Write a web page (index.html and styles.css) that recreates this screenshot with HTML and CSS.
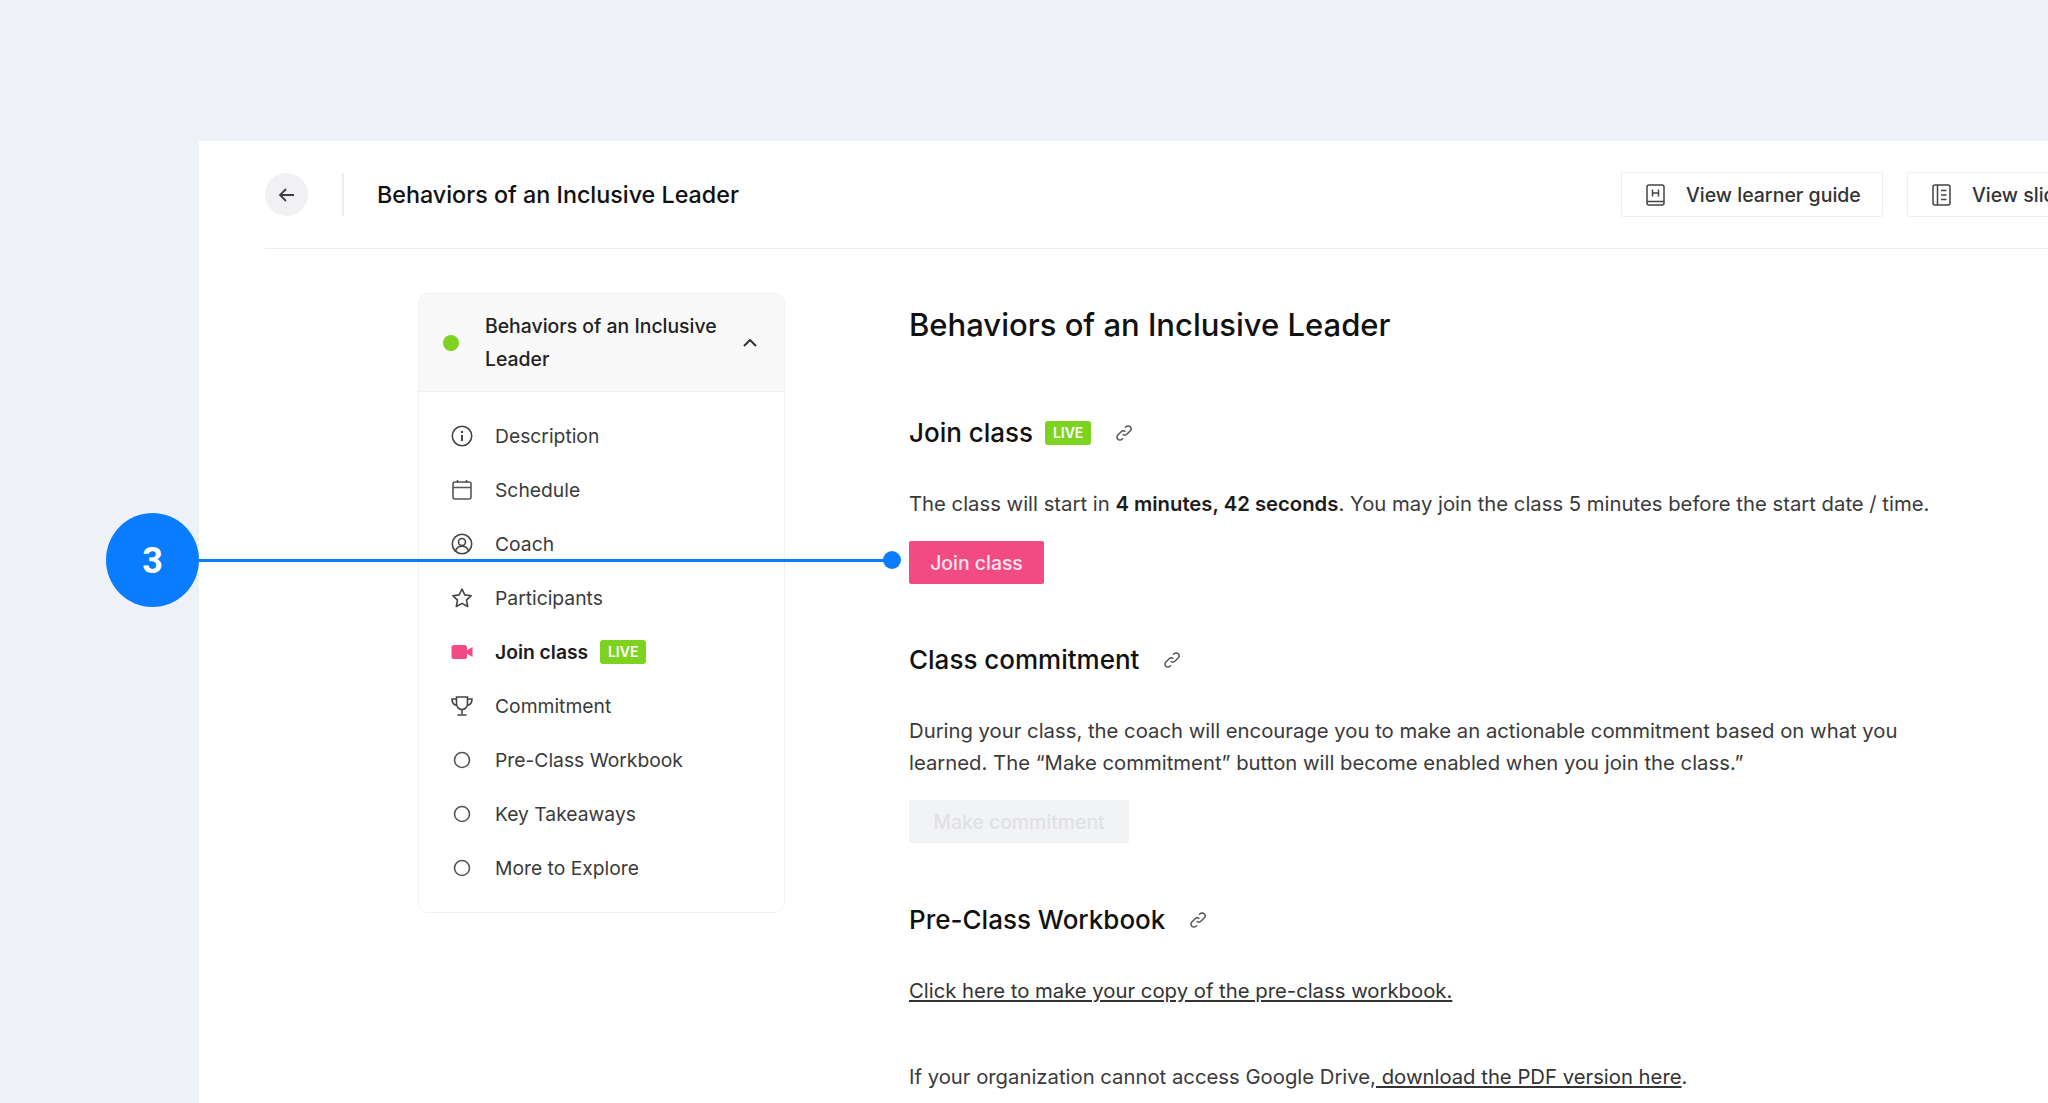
FILE: index.html
```html
<!DOCTYPE html>
<html lang="en">
<head>
  <meta charset="UTF-8">
  <title>Behaviors of an Inclusive Leader</title>
  <link rel="stylesheet" href="styles.css">
</head>
<body>
  <div class="panel">
    <header class="topbar">
      <button class="back">
        <svg width="20" height="20" viewBox="0 0 20 20" fill="none" stroke="#3c3c44" stroke-width="1.8"><path d="M17 10H3.500M9 4l-6 6 6 6"/></svg>
      </button>
      <div class="topbar-rule"></div>
      <div class="topbar-title">Behaviors of an Inclusive Leader</div>
      <button class="ghost">
        <svg width="19" height="22" viewBox="0 0 19 22" fill="none" stroke="#444" stroke-width="1.500"><rect x="1" y="1" width="17" height="20" rx="2"/><path d="M1 17.500h17M6.500 5.500v7M12.500 5.500v7M6.500 9h6"/></svg>
        View learner guide
      </button>
      <button class="ghost">
        <svg width="19" height="22" viewBox="0 0 19 22" fill="none" stroke="#444" stroke-width="1.500"><rect x="1" y="1" width="17" height="20" rx="2"/><path d="M5.500 1v20M9 6.500h5.500M9 11h5.500M9 15.500h5.500"/></svg>
        View slides
      </button>
    </header>

    <div class="layout">
      <aside class="side">
        <div class="side-head">
          <span class="dot"></span>
          <span class="side-title">Behaviors of an Inclusive Leader</span>
          <svg width="16" height="10" viewBox="0 0 16 10" fill="none" stroke="#333" stroke-width="2"><path d="M2 8l6-6 6 6"/></svg>
        </div>
        <ul class="menu">
          <li><svg class="mi" viewBox="0 0 22 22" fill="none" stroke="#444" stroke-width="1.600"><circle cx="11" cy="11" r="9.700"/><path d="M11 10v6" stroke-width="2"/><path d="M11 6v2" stroke-width="2"/></svg>Description</li>
          <li><svg class="mi" viewBox="0 0 22 22" fill="none" stroke="#555" stroke-width="1.600"><rect x="2" y="3" width="18" height="17" rx="2"/><path d="M2 8.500h18M6.500 1v3M15.500 1v3"/></svg>Schedule</li>
          <li><svg class="mi" viewBox="0 0 22 22" fill="none" stroke="#444" stroke-width="1.600"><circle cx="11" cy="11" r="9.700"/><circle cx="11" cy="9" r="3.500"/><path d="M4.500 18c1-3.500 3.500-4.800 6.500-4.800s5.500 1.300 6.500 4.800"/></svg>Coach</li>
          <li><svg class="mi" viewBox="0 0 22 22" fill="none" stroke="#444" stroke-width="1.600" stroke-linejoin="round"><path d="M11 2l2.800 5.900 6.400.8-4.700 4.400 1.200 6.400L11 16.400l-5.700 3.100 1.200-6.400L1.800 8.700l6.400-.8z"/></svg>Participants</li>
          <li class="on"><svg class="mi" viewBox="0 0 22 22" fill="#f24b83"><rect x="0.500" y="4" width="15.500" height="14" rx="2.500"/><path d="M15.500 9.500l6-3.500v10l-6-3.500z"/></svg>Join class<span class="live">LIVE</span></li>
          <li><svg class="mi" viewBox="0 0 22 22" fill="none" stroke="#444" stroke-width="1.600"><path d="M5.500 2h11v7a5.500 5.500 0 0 1-11 0zM5.500 4H1c0 4 1.500 6 5 6.500M16.500 4H21c0 4-1.500 6-5 6.500M11 14.500V19M6.500 20h9"/></svg>Commitment</li>
          <li><svg class="mi" viewBox="0 0 22 22" fill="none" stroke="#555" stroke-width="1.600"><circle cx="11" cy="11" r="7.500"/></svg>Pre-Class Workbook</li>
          <li><svg class="mi" viewBox="0 0 22 22" fill="none" stroke="#555" stroke-width="1.600"><circle cx="11" cy="11" r="7.500"/></svg>Key Takeaways</li>
          <li><svg class="mi" viewBox="0 0 22 22" fill="none" stroke="#555" stroke-width="1.600"><circle cx="11" cy="11" r="7.500"/></svg>More to Explore</li>
        </ul>
      </aside>

      <main class="main">
        <h1>Behaviors of an Inclusive Leader</h1>

        <section class="first">
          <h2>Join class<span class="live">LIVE</span>
            <svg class="chain" viewBox="0 0 16 16" fill="none" stroke="#555" stroke-width="1.300"><path d="M6.800 9.200a2.600 2.600 0 0 0 3.700 0l3-3a2.600 2.600 0 0 0-3.700-3.700L9 3.300M9.200 6.800a2.600 2.600 0 0 0-3.700 0l-3 3a2.600 2.600 0 0 0 3.700 3.700l.8-.8"/></svg>
          </h2>
          <p>The class will start in <b>4 minutes, 42 seconds</b>. You may join the class 5 minutes before the start date / time.</p>
          <button class="btn btn-pink">Join class</button>
        </section>

        <section>
          <h2>Class commitment
            <svg class="chain" viewBox="0 0 16 16" fill="none" stroke="#555" stroke-width="1.300"><path d="M6.800 9.200a2.600 2.600 0 0 0 3.700 0l3-3a2.600 2.600 0 0 0-3.700-3.700L9 3.300M9.200 6.800a2.600 2.600 0 0 0-3.700 0l-3 3a2.600 2.600 0 0 0 3.700 3.700l.8-.8"/></svg>
          </h2>
          <p>During your class, the coach will encourage you to make an actionable commitment based on what you<br>learned. The “Make commitment” button will become enabled when you join the class.”</p>
          <button class="btn btn-off">Make commitment</button>
        </section>

        <section>
          <h2>Pre-Class Workbook
            <svg class="chain" viewBox="0 0 16 16" fill="none" stroke="#555" stroke-width="1.300"><path d="M6.800 9.200a2.600 2.600 0 0 0 3.700 0l3-3a2.600 2.600 0 0 0-3.700-3.700L9 3.300M9.200 6.800a2.600 2.600 0 0 0-3.700 0l-3 3a2.600 2.600 0 0 0 3.700 3.700l.8-.8"/></svg>
          </h2>
          <p><a>Click here to make your copy of the pre-class workbook.</a></p>
          <p class="gap">If your organization cannot access Google Drive,<a> download the PDF version here</a>.</p>
        </section>
      </main>
    </div>
  </div>

  <!-- callout sits over the page -->
  <div class="callout">
    <div class="callout-num">3</div>
    <div class="callout-line"></div>
    <div class="callout-dot"></div>
  </div>
</body>
</html>
```

FILE: styles.css
```css
* {
  box-sizing: border-box;
}

html, body {
  height: 100%;
  margin: 0;
  overflow: hidden;
}

body {
  background-color: #eef2f7;
  color: #3a3a3a;
  font-family: Inter, "Liberation Sans", sans-serif;
  font-size: 20px;
  padding: 141px 0 0 199px;
}

button {
  font-family: inherit;
}

.panel {
  background-color: white;
  height: 962px;
  overflow: hidden;
  padding-left: 66px;
}

/* top bar */
.topbar {
  align-items: center;
  border-bottom: 1px solid #edf1f6;
  display: flex;
  height: 108px;
  width: 1904px;
}
.back {
  align-items: center;
  background-color: #f1f1f3;
  border: none;
  border-radius: 50%;
  display: flex;
  height: 43px;
  justify-content: center;
  padding: 0;
  width: 43px;
}
.topbar-rule {
  background-color: #e9edf3;
  height: 43px;
  margin-left: 34px;
  width: 2px;
}
.topbar-title {
  color: #111;
  font-size: 23.300px;
  font-weight: 500;
  margin-left: 33px;
  margin-right: auto;
}
.ghost {
  align-items: center;
  background-color: white;
  border: 1px solid #eeeff1;
  border-radius: 2px;
  color: #333;
  display: flex;
  flex-shrink: 0;
  font-size: 19.500px;
  font-weight: 500;
  gap: 21px;
  height: 45px;
  margin-left: 24px;
  padding: 0 10px 0 24px;
  white-space: nowrap;
  width: 262px;
}

/* two columns */
.layout {
  display: flex;
  padding: 44px 0 0 153px;
}

.side {
  border: 1px solid #f1f2f4;
  border-radius: 10px;
  flex-shrink: 0;
  height: 620px;
  overflow: hidden;
  width: 367px;
}
.side-head {
  align-items: center;
  background-color: #f9f9f9;
  border-bottom: 1px solid #f0f1f3;
  display: flex;
  height: 98px;
  padding: 0 26px 0 24px;
}
.dot {
  background-color: #7ed321;
  border-radius: 50%;
  flex-shrink: 0;
  height: 16px;
  width: 16px;
}
.side-title {
  color: #222;
  flex: 1;
  font-size: 19.400px;
  font-weight: 500;
  line-height: 33px;
  margin-left: 26px;
  margin-right: 12px;
}
.menu {
  font-size: 19.300px;
  list-style: none;
  margin: 0;
  padding: 17px 0 0 32px;
}
.menu li {
  align-items: center;
  display: flex;
  height: 54px;
}
.menu li.on {
  color: #1c1c1c;
  font-weight: 600;
}
.mi {
  flex-shrink: 0;
  height: 22px;
  margin-right: 22px;
  width: 22px;
}
.live {
  background-color: #7ed321;
  border-radius: 3px;
  color: white;
  display: inline-block;
  font-size: 14px;
  font-weight: 600;
  height: 24px;
  line-height: 24px;
  margin-left: 12px;
  text-align: center;
  width: 46px;
}

/* content */
.main {
  margin-left: 124px;
  width: 1040px;
}
h1 {
  color: #111;
  font-size: 31px;
  font-weight: 500;
  line-height: 40px;
  margin: 12px 0 0;
}
h2 {
  align-items: center;
  color: #111;
  display: flex;
  font-size: 26px;
  font-weight: 500;
  line-height: 32px;
  margin: 0 0 39px;
}
section {
  margin-top: 60px;
}
section.first {
  margin-top: 72px;
}
section:last-child {
  margin-top: 61px;
}
.chain {
  height: 18px;
  margin-left: 24px;
  width: 18px;
}
p {
  font-size: 20.300px;
  line-height: 32.500px;
  margin: 0 0 20px;
  white-space: nowrap;
}
p.gap {
  margin-top: 54px;
}
p b {
  color: #1c1c1c;
  font-weight: 600;
}
a {
  color: #333;
  text-decoration: underline;
}
.btn {
  border: none;
  border-radius: 2px;
  display: block;
  font-size: 19.400px;
  font-weight: 500;
  height: 43px;
  padding: 2px 0 0;
}
.btn-pink {
  background-color: #f24b83;
  color: #fde4ec;
  width: 135px;
}
.btn-off {
  background-color: #f2f3f5;
  color: #dfe1e4;
  width: 220px;
}

/* numbered callout */
.callout {
  align-items: center;
  display: flex;
  left: 106px;
  position: absolute;
  top: 513px;
}
.callout-num {
  align-items: center;
  background-color: #0a7cff;
  border-radius: 50%;
  color: white;
  display: flex;
  font-family: Roboto, sans-serif;
  font-size: 36px;
  font-weight: 700;
  height: 94px;
  justify-content: center;
  padding-top: 2px;
  width: 93px;
}
.callout-line {
  background-color: #0a7cff;
  height: 3px;
  width: 686px;
}
.callout-dot {
  background-color: #0a7cff;
  border-radius: 50%;
  height: 18px;
  margin-left: -2px;
  width: 18px;
}
```
